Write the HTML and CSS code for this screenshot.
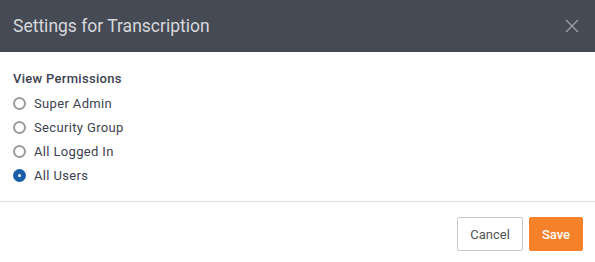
FILE: index.html
```html
<!DOCTYPE html>
<html>
<head>
<meta charset="utf-8">
<link rel="stylesheet" href="styles.css">
</head>
<body>
<div class="modal">
  <div class="modal-header">
    <h1 class="modal-title">Settings for Transcription</h1>
    <button class="close" aria-label="Close">
      <svg width="14" height="14" viewBox="0 0 14 14"><path d="M1 1L13 13M13 1L1 13" stroke="#9a9da5" stroke-width="1.4" fill="none"/></svg>
    </button>
  </div>
  <div class="modal-body">
    <div class="field-label">View Permissions</div>
    <label class="radio"><span class="dot"></span>Super Admin</label>
    <label class="radio"><span class="dot"></span>Security Group</label>
    <label class="radio"><span class="dot"></span>All Logged In</label>
    <label class="radio"><span class="dot checked"></span>All Users</label>
  </div>
  <div class="modal-footer">
    <button class="btn btn-default">Cancel</button>
    <button class="btn btn-primary">Save</button>
  </div>
</div>
</body>
</html>
```
FILE: styles.css
```css
html, body {
  margin: 0;
  padding: 0;
  background: #fff;
}
body {
  font-family: Roboto, "Liberation Sans", sans-serif;
  width: 595px;
  height: 262px;
  overflow: hidden;
}
.modal {
  display: flex;
  flex-direction: column;
}
.modal-header {
  height: 52px;
  background: #464a55;
  display: flex;
  align-items: center;
  justify-content: space-between;
  padding: 0 16px 0 13px;
}
.modal-title {
  margin: 0;
  font-size: 17.5px;
  font-weight: 400;
  color: #d6d8dc;
}
.close {
  background: none;
  border: 0;
  padding: 0;
  width: 14px;
  height: 14px;
  display: flex;
}
.modal-body {
  padding: 15px 13px 14px;
  border-bottom: 1px solid #dcdcdc;
}
.field-label {
  font-size: 13px;
  font-weight: 500;
  color: #3d4250;
  line-height: 24px;
  letter-spacing: 0.3px;
}
.radio {
  display: flex;
  align-items: center;
  height: 24px;
  font-size: 13px;
  color: #3d4250;
  letter-spacing: 0.35px;
}
.dot {
  box-sizing: border-box;
  width: 13px;
  height: 13px;
  border-radius: 50%;
  border: 2px solid #9a9a9f;
  margin-right: 8px;
  background: #fff;
  position: relative;
}
.dot.checked {
  border: none;
  background: #1a5ea8;
}
.dot.checked::after {
  content: "";
  position: absolute;
  left: 5px;
  top: 5px;
  width: 3px;
  height: 3px;
  border-radius: 50%;
  background: #fff;
}
.modal-footer {
  display: flex;
  justify-content: flex-end;
  gap: 6px;
  padding: 15px 12px 12px;
}
.btn {
  font-family: Roboto, "Liberation Sans", sans-serif;
  font-size: 13px;
  height: 34px;
  padding: 0 12px;
  border-radius: 2px;
  cursor: pointer;
}
.btn-default {
  background: #fff;
  border: 1px solid #c9c9c9;
  color: #555;
}
.btn-primary {
  background: #f5822a;
  border: 1px solid #f5822a;
  color: #fff;
  font-weight: 500;
}
```
